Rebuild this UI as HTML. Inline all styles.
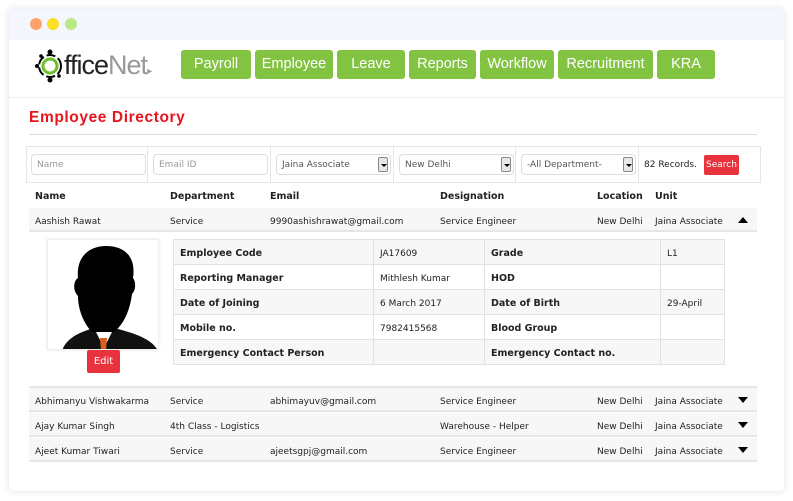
<!DOCTYPE html>
<html><head><meta charset="utf-8"><style>
*{box-sizing:border-box;margin:0;padding:0}
body{width:793px;height:501px;background:#fff;font-family:"DejaVu Sans","Liberation Sans",sans-serif;position:relative;overflow:hidden;color:#222}
.card{position:absolute;left:9px;top:9px;width:775px;height:482px;background:#fff;border-radius:4px;box-shadow:0 0 8px rgba(0,0,0,.12)}
.tb{position:absolute;left:9px;top:9px;width:775px;height:31px;background:#f3f7fd;border-radius:4px 4px 0 0}
.dot{position:absolute;top:18px;width:12px;height:12px;border-radius:50%}
.a{position:absolute}
.nav{position:absolute;top:50px;height:29px;background:#82c341;border-radius:3px;color:#fff;font-family:"Liberation Sans",sans-serif;font-size:14.5px;text-align:center;line-height:29px}
.inp{position:absolute;top:154px;height:21px;border:1px solid #ddd;border-radius:4px;font-size:9px;color:#999;padding-left:5px;line-height:21px;background:#fff}
.sel{color:#555}
.dd{position:absolute;right:2px;top:2px;width:10px;height:15px;border:1px solid #888;background:#e8e8e8;border-radius:2px}
.dd:after{content:"";position:absolute;left:2px;top:6px;border-left:3px solid transparent;border-right:3px solid transparent;border-top:3px solid #000}
.t{position:absolute;font-size:9px;white-space:nowrap;margin-top:2px}
.b{font-weight:bold;font-size:9.5px}
.row{position:absolute;left:29px;width:728px;height:24px;background:#f7f7f7;border-bottom:2px solid #e6e6e6}
.up,.down{position:absolute;left:738px;width:0;height:0;border-left:5px solid transparent;border-right:5px solid transparent}
.up{border-bottom:6px solid #000}.down{border-top:6px solid #000}
table{position:absolute;left:173px;top:239px;border-collapse:collapse;font-size:9px}
td{border:1px solid #e2e2e2;height:25px;padding-left:6px;padding-top:3px}
tr:nth-child(odd) td{background:#f7f7f7}
td.k{font-weight:bold;font-size:9.5px}
</style></head><body>
<div class="card"></div>
<div class="tb"></div>
<div class="dot" style="left:30px;background:#fda26b"></div>
<div class="dot" style="left:47px;background:#fbe125"></div>
<div class="dot" style="left:65px;background:#b9e886"></div>
<svg class="a" style="left:34px;top:48px" width="32" height="36" viewBox="0 0 32 36">
<circle cx="16" cy="18" r="11" fill="none" stroke="#000" stroke-width="2" stroke-dasharray="9 3"/>
<circle cx="16" cy="18" r="7" fill="none" stroke="#6bbf2a" stroke-width="3"/>
<circle cx="16" cy="4" r="2.5"/><circle cx="16" cy="32" r="2.5"/><circle cx="3" cy="18" r="2"/><circle cx="7" cy="8" r="1.8"/><circle cx="25" cy="28" r="1.8"/>
</svg>
<div class="a" style="left:64px;top:50px;font-family:'Liberation Sans',sans-serif;font-size:27px;letter-spacing:-1px;line-height:30px"><span style="color:#222">ffice</span><span style="color:#999">Net</span><span style="color:#999;font-size:10px">▸</span></div>
<div class="nav" style="left:181px;width:70px">Payroll</div>
<div class="nav" style="left:255px;width:78px">Employee</div>
<div class="nav" style="left:337px;width:68px">Leave</div>
<div class="nav" style="left:409px;width:67px">Reports</div>
<div class="nav" style="left:480px;width:74px">Workflow</div>
<div class="nav" style="left:558px;width:95px">Recruitment</div>
<div class="nav" style="left:657px;width:58px">KRA</div>
<div class="a" style="left:9px;top:97px;width:775px;height:1px;background:#eee"></div>
<div class="a" style="left:29px;top:109px;color:#e8141c;font-family:'Liberation Sans',sans-serif;font-weight:bold;font-size:15.5px;letter-spacing:.6px">Employee Directory</div>
<div class="a" style="left:29px;top:134px;width:728px;height:1px;background:#ddd"></div>
<div class="a" style="left:26px;top:146px;width:735px;height:37px;border:1px solid #e6e6e6"></div>
<div class="a" style="left:147px;top:146px;width:1px;height:37px;background:#e6e6e6"></div>
<div class="a" style="left:270px;top:146px;width:1px;height:37px;background:#e6e6e6"></div>
<div class="a" style="left:393px;top:146px;width:1px;height:37px;background:#e6e6e6"></div>
<div class="a" style="left:515px;top:146px;width:1px;height:37px;background:#e6e6e6"></div>
<div class="a" style="left:638px;top:146px;width:1px;height:37px;background:#e6e6e6"></div>
<div class="inp" style="left:31px;width:115px">Name</div>
<div class="inp" style="left:153px;width:115px">Email ID</div>
<div class="inp sel" style="left:276px;width:115px">Jaina Associate<div class="dd"></div></div>
<div class="inp sel" style="left:399px;width:115px">New Delhi<div class="dd"></div></div>
<div class="inp sel" style="left:521px;width:115px">-All Department-<div class="dd"></div></div>
<div class="t" style="left:644px;top:158px">82 Records.</div>
<div class="a" style="left:704px;top:155px;width:35px;height:20px;background:#e8333c;border-radius:2px;color:#fff;font-size:9px;text-align:center;line-height:20px">Search</div>
<div class="t b" style="left:35px;top:189px">Name</div>
<div class="t b" style="left:170px;top:189px">Department</div>
<div class="t b" style="left:270px;top:189px">Email</div>
<div class="t b" style="left:440px;top:189px">Designation</div>
<div class="t b" style="left:597px;top:189px">Location</div>
<div class="t b" style="left:655px;top:189px">Unit</div>
<div class="row" style="top:208px"></div>
<div class="t" style="left:35px;top:215px">Aashish Rawat</div>
<div class="t" style="left:170px;top:215px">Service</div>
<div class="t" style="left:270px;top:215px">9990ashishrawat@gmail.com</div>
<div class="t" style="left:440px;top:215px">Service Engineer</div>
<div class="t" style="left:597px;top:215px">New Delhi</div>
<div class="t" style="left:655px;top:215px">Jaina Associate</div>
<div class="up" style="top:217px"></div>
<div class="a" style="left:47px;top:239px;width:112px;height:111px;border:1px solid #eee;box-shadow:0 0 3px rgba(0,0,0,.1);overflow:hidden;background:#fff">
<svg width="112" height="111" viewBox="0 0 112 111">
<path d="M36 111 L46 92 L66 92 L76 111 Z" fill="#fff"/>
<path d="M14 111 C18 98 32 92 46 88 L56 108 L66 88 C82 92 104 98 110 111 Z" fill="#111"/>
<path d="M52 98 L59 98 L58 111 L53 111 Z" fill="#d8601a"/>
<path d="M44 92 C36 84 30 70 30 56 C24 50 26 40 30 38 C28 18 40 6 58 6 C78 6 88 18 85 38 C88 42 88 50 84 54 C82 70 76 84 66 92 Z" fill="#000"/>
</svg></div>
<div class="a" style="left:87px;top:350px;width:33px;height:23px;background:#e8333c;border-radius:2px;color:#fff;font-size:10px;text-align:center;line-height:23px">Edit</div>
<table>
<tr><td class="k" style="width:200px">Employee Code</td><td style="width:111px">JA17609</td><td class="k" style="width:176px">Grade</td><td style="width:64px">L1</td></tr>
<tr><td class="k">Reporting Manager</td><td>Mithlesh Kumar</td><td class="k">HOD</td><td></td></tr>
<tr><td class="k">Date of Joining</td><td>6 March 2017</td><td class="k">Date of Birth</td><td>29-April</td></tr>
<tr><td class="k">Mobile no.</td><td>7982415568</td><td class="k">Blood Group</td><td></td></tr>
<tr><td class="k">Emergency Contact Person</td><td></td><td class="k">Emergency Contact no.</td><td></td></tr>
</table>
<div class="a" style="left:29px;top:386px;width:728px;height:2px;background:#e6e6e6"></div>
<div class="row" style="top:388px"></div>
<div class="row" style="top:413px"></div>
<div class="row" style="top:438px"></div>
<div class="t" style="left:35px;top:395px">Abhimanyu Vishwakarma</div><div class="t" style="left:170px;top:395px">Service</div><div class="t" style="left:270px;top:395px">abhimayuv@gmail.com</div><div class="t" style="left:440px;top:395px">Service Engineer</div><div class="t" style="left:597px;top:395px">New Delhi</div><div class="t" style="left:655px;top:395px">Jaina Associate</div><div class="down" style="top:397px"></div>
<div class="t" style="left:35px;top:420px">Ajay Kumar Singh</div><div class="t" style="left:170px;top:420px">4th Class - Logistics</div><div class="t" style="left:440px;top:420px">Warehouse - Helper</div><div class="t" style="left:597px;top:420px">New Delhi</div><div class="t" style="left:655px;top:420px">Jaina Associate</div><div class="down" style="top:422px"></div>
<div class="t" style="left:35px;top:445px">Ajeet Kumar Tiwari</div><div class="t" style="left:170px;top:445px">Service</div><div class="t" style="left:270px;top:445px">ajeetsgpj@gmail.com</div><div class="t" style="left:440px;top:445px">Service Engineer</div><div class="t" style="left:597px;top:445px">New Delhi</div><div class="t" style="left:655px;top:445px">Jaina Associate</div><div class="down" style="top:447px"></div>
</body></html>
